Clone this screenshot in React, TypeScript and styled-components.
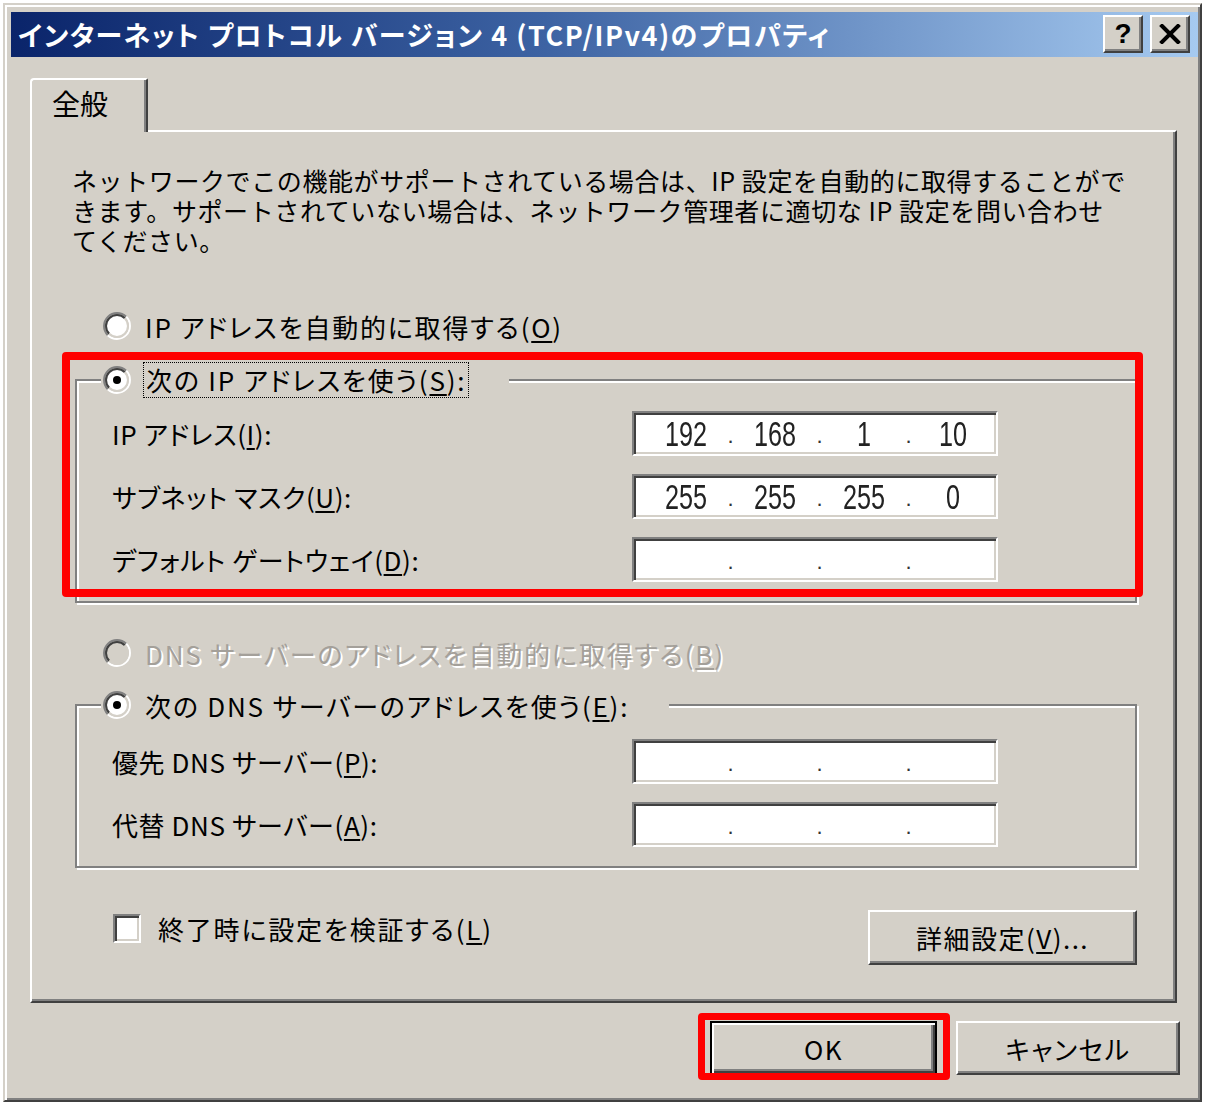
import React from "react";
import styled, { createGlobalStyle, css } from "styled-components";

const FACE = `"Noto Sans CJK JP", "Noto Sans", sans-serif`;

const GlobalStyle = createGlobalStyle`
  html, body { margin: 0; padding: 0; background: #ffffff; }
  body { font-family: ${FACE}; color: #000; }
  * { box-sizing: border-box; }
  u { text-decoration-thickness: 2px; text-underline-offset: 3px; }
`;

const raised = css`
  background: #d4d0c8;
  border-style: solid;
  border-width: 2px;
  border-color: #ffffff #404040 #404040 #ffffff;
  box-shadow: inset -2px -2px 0 #808080;
`;

const sunken = css`
  border-style: solid;
  border-width: 2px;
  border-color: #808080 #ffffff #ffffff #808080;
  box-shadow: inset 2px 2px 0 #404040, inset -2px -2px 0 #d4d0c8;
`;

const Page = styled.div`
  width: 1210px;
  height: 1109px;
  padding: 3px 0 0 3px;
  overflow: hidden;
`;

const Window = styled.div`
  width: 1199px;
  height: 1099px;
  background: #d4d0c8;
  border-style: solid;
  border-width: 2px;
  border-color: #d4d0c8 #404040 #404040 #d4d0c8;
  box-shadow: inset 2px 2px 0 #ffffff, inset -2px -2px 0 #808080;
  padding: 7px 2px 0 6px;
  display: flex;
  flex-direction: column;
`;

const TitleBar = styled.div`
  height: 45px;
  display: flex;
  align-items: center;
  justify-content: space-between;
  padding: 0 8px 0 7px;
  background: linear-gradient(to right, #0a246a 0%, #3d63a3 45%, #a6caf0 100%);
`;

const TitleText = styled.div`
  color: #ffffff;
  font-weight: 700;
  font-size: 27px;
  white-space: nowrap;
  font-feature-settings: "palt";
  letter-spacing: 1.5px;
`;

const CaptionButtons = styled.div`
  display: flex;
  gap: 7px;
  align-self: flex-start;
  margin-top: 3px;
`;

const CaptionButton = styled.div`
  ${raised};
  width: 40px;
  height: 38px;
  display: flex;
  align-items: center;
  justify-content: center;
  font-family: "Liberation Sans", sans-serif;
  font-weight: 700;
  font-size: 28px;
  line-height: 1;
`;

const TabRow = styled.div`
  display: flex;
  margin: 21px 0 -2px 19px;
  position: relative;
  z-index: 1;
`;

const Tab = styled.div`
  width: 118px;
  height: 54px;
  background: #d4d0c8;
  border-top: 2px solid #ffffff;
  border-left: 2px solid #ffffff;
  border-right: 2px solid #404040;
  border-top-left-radius: 4px;
  border-top-right-radius: 2px;
  box-shadow: inset -2px 0 0 #808080;
  padding: 0 0 6px 20px;
  display: flex;
  align-items: center;
  font-size: 28px;
`;

const Panel = styled.div`
  margin-left: 19px;
  width: 1147px;
  height: 873px;
  border-style: solid;
  border-width: 2px;
  border-color: #ffffff #404040 #404040 #ffffff;
  box-shadow: inset -2px -2px 0 #808080;
  padding: 33px 0 0 40px;
  display: flex;
  flex-direction: column;
`;

const Desc = styled.div`
  font-size: 25px;
  line-height: 30px;
  letter-spacing: 0.6px;
  white-space: nowrap;
`;

const OptionRow = styled.div<{ $top: number }>`
  display: flex;
  align-items: center;
  gap: 14px;
  height: 36px;
  margin: ${(p) => p.$top}px 0 0 31px;
`;

const OptionText = styled.span<{ $disabled?: boolean }>`
  font-size: 26px;
  white-space: nowrap;
  font-feature-settings: "palt";
  letter-spacing: 1.8px;
  color: ${(p) => (p.$disabled ? "#a4a09a" : "#000")};
  text-shadow: ${(p) => (p.$disabled ? "2px 2px 0 #ffffff" : "none")};
`;

const Group = styled.div<{ $top: number }>`
  position: relative;
  margin: ${(p) => p.$top}px 0 0 3px;
  width: 1062px;
  border: 2px solid #808080;
  box-shadow: inset 2px 2px 0 #ffffff, 2px 2px 0 #ffffff;
  padding: 0 0 19px 35px;
`;

const Legend = styled.div<{ $gap: number }>`
  display: flex;
  align-items: center;
  gap: ${(p) => p.$gap}px;
  width: fit-content;
  height: 36px;
  margin: -19px 0 0 -11px;
  padding: 0 40px 0 2px;
  background: #d4d0c8;
`;

const FocusText = styled(OptionText)`
  border: 1px dotted #000;
  height: 36px;
  line-height: 33px;
  padding: 0 2px;
`;

const Fields = styled.div<{ $top: number }>`
  display: grid;
  grid-template-columns: 520px 366px;
  row-gap: 18px;
  align-items: center;
  margin-top: ${(p) => p.$top}px;
`;

const FieldLabel = styled.span`
  font-size: 26px;
  white-space: nowrap;
  font-feature-settings: "palt";
  letter-spacing: 0.6px;
`;

const IpField = styled.div`
  ${sunken};
  height: 45px;
  background: #ffffff;
  display: flex;
  align-items: center;
  padding-left: 12px;
`;

const Octet = styled.span`
  width: 80px;
  text-align: center;
  font-family: "Liberation Sans", sans-serif;
  font-size: 35px;
  line-height: 1;
  color: #222;
  transform: scaleX(0.72);
`;

const Dot = styled.span`
  width: 9px;
  text-align: center;
  font-family: "Liberation Sans", sans-serif;
  font-size: 22px;
  color: #333;
  align-self: flex-end;
  padding-bottom: 5px;
`;

const RedMark = styled.div<{ $t: number; $r: number; $b: number; $l: number; $w: number }>`
  position: absolute;
  top: ${(p) => p.$t}px;
  right: ${(p) => p.$r}px;
  bottom: ${(p) => p.$b}px;
  left: ${(p) => p.$l}px;
  border: ${(p) => p.$w}px solid #ff0000;
  border-radius: 4px;
  pointer-events: none;
`;

const BottomRow = styled.div`
  display: flex;
  justify-content: space-between;
  align-items: flex-start;
  width: 1062px;
  margin: 42px 0 0 3px;
`;

const CheckLabel = styled.div`
  display: flex;
  align-items: center;
  gap: 17px;
  height: 36px;
  margin-left: 38px;
`;

const CheckBox = styled.div`
  ${sunken};
  width: 28px;
  height: 29px;
  background: #ffffff;
`;

const PushButton = styled.div<{ $w: number; $h: number }>`
  ${raised};
  width: ${(p) => p.$w}px;
  height: ${(p) => p.$h}px;
  display: flex;
  align-items: center;
  justify-content: center;
  font-size: 26px;
  white-space: nowrap;
  font-feature-settings: "palt";
  letter-spacing: 1.5px;
`;

const DefaultButton = styled(PushButton)`
  border: 2px solid #000;
  box-shadow: inset 2px 2px 0 #ffffff, inset -2px -2px 0 #404040, inset -4px -4px 0 #808080;
`;

const ButtonRow = styled.div`
  display: flex;
  justify-content: flex-end;
  gap: 19px;
  margin-top: 18px;
  padding-right: 18px;
`;

const Marked = styled.div`
  position: relative;
`;

const K = 0.7071;
function arcPath(r: number, half: "tl" | "br") {
  const c = 14;
  const x1 = c - r * K;
  const y1 = c + r * K;
  const x2 = c + r * K;
  const y2 = c - r * K;
  return half === "tl"
    ? `M${x1} ${y1} A${r} ${r} 0 0 1 ${x2} ${y2}`
    : `M${x2} ${y2} A${r} ${r} 0 0 1 ${x1} ${y1}`;
}

function Radio({ checked, disabled }: { checked?: boolean; disabled?: boolean }) {
  return (
    <svg width="28" height="28" viewBox="0 0 28 28" style={{ flex: "none" }}>
      <circle cx="14" cy="14" r="11" fill={disabled ? "#d4d0c8" : "#ffffff"} />
      <path d={arcPath(13, "tl")} stroke="#808080" strokeWidth="2" fill="none" />
      <path d={arcPath(13, "br")} stroke="#ffffff" strokeWidth="2" fill="none" />
      <path d={arcPath(11, "tl")} stroke="#404040" strokeWidth="2" fill="none" />
      <path d={arcPath(11, "br")} stroke="#d4d0c8" strokeWidth="2" fill="none" />
      {checked && <circle cx="14" cy="14" r="4" fill="#000" />}
    </svg>
  );
}

function CloseGlyph() {
  return (
    <svg width="22" height="20" viewBox="0 0 22 20">
      <path d="M3 2 L19 18 M19 2 L3 18" stroke="#000" strokeWidth="4" strokeLinecap="square" />
    </svg>
  );
}

function Ip({ value }: { value?: string[] }) {
  const parts = value ?? ["", "", "", ""];
  return (
    <IpField>
      {parts.map((p, i) => (
        <React.Fragment key={i}>
          <Octet>{p}</Octet>
          {i < 3 && <Dot>.</Dot>}
        </React.Fragment>
      ))}
    </IpField>
  );
}

export default function App() {
  return (
    <Page>
      <GlobalStyle />
      <Window>
        <TitleBar>
          <TitleText>インターネット プロトコル バージョン 4 (TCP/IPv4)のプロパティ</TitleText>
          <CaptionButtons>
            <CaptionButton>?</CaptionButton>
            <CaptionButton>
              <CloseGlyph />
            </CaptionButton>
          </CaptionButtons>
        </TitleBar>

        <TabRow>
          <Tab>全般</Tab>
        </TabRow>

        <Panel>
          <Desc>
            ネットワークでこの機能がサポートされている場合は、IP 設定を自動的に取得することがで
            <br />
            きます。サポートされていない場合は、ネットワーク管理者に適切な IP 設定を問い合わせ
            <br />
            てください。
          </Desc>

          <OptionRow $top={53}>
            <Radio />
            <OptionText>
              IP アドレスを自動的に取得する(<u>O</u>)
            </OptionText>
          </OptionRow>

          <Group $top={35}>
            <Legend $gap={12}>
              <Radio checked />
              <FocusText>
                次の IP アドレスを使う(<u>S</u>):
              </FocusText>
            </Legend>
            <Fields $top={13}>
              <FieldLabel>
                IP アドレス(<u>I</u>):
              </FieldLabel>
              <Ip value={["192", "168", "1", "10"]} />
              <FieldLabel>
                サブネット マスク(<u>U</u>):
              </FieldLabel>
              <Ip value={["255", "255", "255", "0"]} />
              <FieldLabel>
                デフォルト ゲートウェイ(<u>D</u>):
              </FieldLabel>
              <Ip />
            </Fields>
            <RedMark $t={-29} $r={-8} $b={4} $l={-15} $w={8} />
          </Group>

          <OptionRow $top={32}>
            <Radio disabled />
            <OptionText $disabled>
              DNS サーバーのアドレスを自動的に取得する(<u>B</u>)
            </OptionText>
          </OptionRow>

          <Group $top={33}>
            <Legend $gap={14}>
              <Radio checked />
              <OptionText>
                次の DNS サーバーのアドレスを使う(<u>E</u>):
              </OptionText>
            </Legend>
            <Fields $top={16}>
              <FieldLabel>
                優先 DNS サーバー(<u>P</u>):
              </FieldLabel>
              <Ip />
              <FieldLabel>
                代替 DNS サーバー(<u>A</u>):
              </FieldLabel>
              <Ip />
            </Fields>
          </Group>

          <BottomRow>
            <CheckLabel>
              <CheckBox />
              <OptionText>
                終了時に設定を検証する(<u>L</u>)
              </OptionText>
            </CheckLabel>
            <PushButton $w={269} $h={55}>
              詳細設定(<u>V</u>)...
            </PushButton>
          </BottomRow>
        </Panel>

        <ButtonRow>
          <Marked>
            <DefaultButton $w={227} $h={54}>
              OK
            </DefaultButton>
            <RedMark $t={-8} $r={-13} $b={-5} $l={-12} $w={7} />
          </Marked>
          <PushButton $w={224} $h={54}>
            キャンセル
          </PushButton>
        </ButtonRow>
      </Window>
    </Page>
  );
}
